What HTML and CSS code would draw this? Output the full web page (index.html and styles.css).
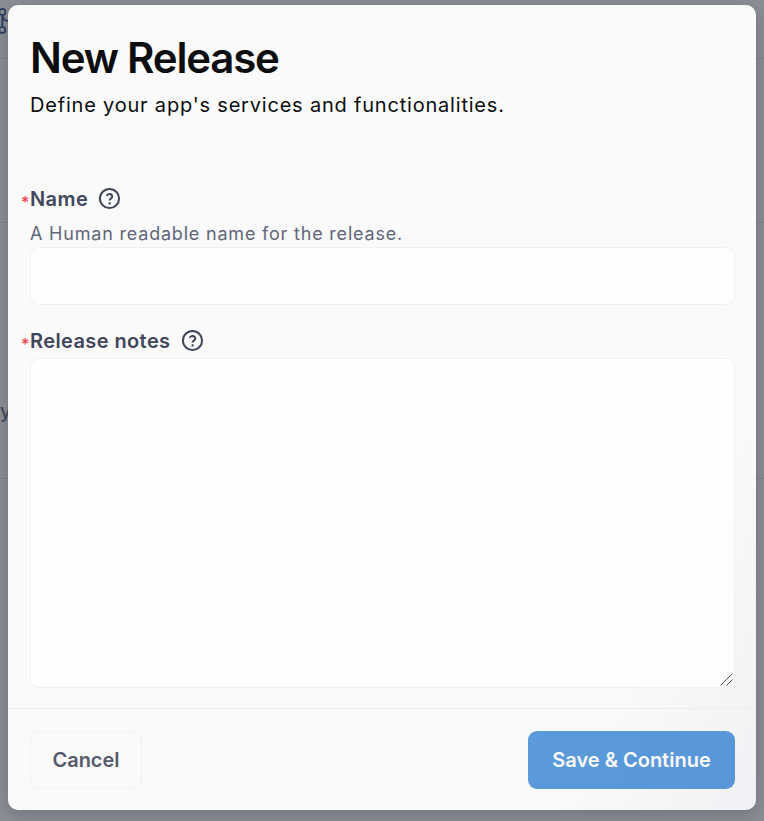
FILE: index.html
```html
<!DOCTYPE html>
<html lang="en">
<head>
<meta charset="utf-8">
<title>New Release</title>
<link rel="stylesheet" href="styles.css">
</head>
<body>
<div class="page" aria-hidden="true">
  <div class="page-row page-header">
    <svg class="branch" width="14" height="28" viewBox="0 0 14 28" fill="none" stroke="#2b3f5e" stroke-width="1.9">
      <circle cx="3.3" cy="5" r="3.1"/><circle cx="3.3" cy="23" r="3.1"/>
      <path d="M3.3 8v12M4 9c0 3.5 2 5 6 5"/>
    </svg>
  </div>
  <div class="page-row page-summary"></div>
  <div class="page-row page-content">y</div>
</div>
<form class="dialog">
  <header class="dialog-header">
    <h1>New Release</h1>
    <p>Define your app's services and functionalities.</p>
  </header>
  <div class="field">
    <label class="label" for="name"><span class="required">*</span>Name
      <svg class="help" viewBox="0 0 24 24"><circle cx="12" cy="12" r="10"/><path d="M9.1 9.3a3 3 0 0 1 5.8.7c0 2-2.8 2.3-2.8 4.1M12.1 16v2.3"/></svg>
    </label>
    <p class="hint">A Human readable name for the release.</p>
    <input id="name" class="control" type="text">
  </div>
  <div class="field notes">
    <label class="label" for="notes"><span class="required">*</span>Release notes
      <svg class="help" viewBox="0 0 24 24"><circle cx="12" cy="12" r="10"/><path d="M9.1 9.3a3 3 0 0 1 5.8.7c0 2-2.8 2.3-2.8 4.1M12.1 16v2.3"/></svg>
    </label>
    <div class="area">
      <textarea id="notes" class="control"></textarea>
      <svg class="grip" width="13" height="13" viewBox="0 0 13 13"><path d="M.5 12.5l12-12M6.5 12.5l6-6"/></svg>
    </div>
  </div>
  <footer class="dialog-footer">
    <button class="button cancel" type="button">Cancel</button>
    <button class="button save" type="button">Save &amp; Continue</button>
  </footer>
</form>
</body>
</html>
```
FILE: styles.css
```css
* { box-sizing: border-box; }
body {
  margin: 0;
  height: 821px;
  padding: 5px 8px 11px;
  overflow: hidden;
  background: #8c8e95;
  font-family: Inter, "Liberation Sans", sans-serif;
}
h1, p { margin: 0; }
.page { position: absolute; inset: 0; overflow: hidden; }
.page-row { border-bottom: 1px solid #7f8189; }
.page-header { height: 59px; padding-top: 7px; }
.branch { display: block; margin-left: -1px; }
.page-summary { height: 164px; }
.page-content { height: 256px; padding-top: 176px; font-size: 20px; line-height: 24px; color: #383c4b; }
.dialog {
  position: relative;
  display: flex;
  flex-direction: column;
  height: 805px;
  border-radius: 10px;
  background: linear-gradient(115deg, #fafafa 82%, #f1f1f5 100%);
  box-shadow: 0 4px 16px rgba(65, 69, 86, .38);
}
.dialog-header { height: 176px; padding: 27px 22px 0; color: #0b0d0e; }
h1 { font-size: 42px; line-height: 52px; font-weight: 600; letter-spacing: -1.2px; }
.dialog-header p { margin-top: 8px; font-size: 20px; line-height: 26px; letter-spacing: .8px; font-weight: 400; }
.field { display: flex; flex-direction: column; padding: 0 21px 0 22px; }
.label {
  position: relative;
  display: flex;
  align-items: center;
  gap: 10px;
  height: 35px;
  color: #41465a;
  font-size: 20px;
  font-weight: 600;
  letter-spacing: .4px;
}
.required { position: absolute; left: -9px; top: 11px; color: #ff3b50; font-size: 16px; line-height: 20px; font-weight: 500; letter-spacing: 0; }
.help { width: 23px; height: 23px; fill: none; stroke: #41465a; stroke-width: 2.1; }
.hint { height: 31px; line-height: 35px; font-size: 18px; letter-spacing: .8px; color: #626679; }
.control {
  display: block;
  width: 100%;
  height: 58px;
  padding: 16px 20px;
  border: 1px solid #f1f1f2;
  border-radius: 9px;
  outline: 0;
  background: rgba(255, 255, 255, .75);
  font: 20px Inter, sans-serif;
}
.notes { margin-top: 18px; }
.area { position: relative; }
textarea.control { height: 330px; resize: none; }
.grip { position: absolute; right: 2px; bottom: 2px; fill: none; stroke: #4c4c4c; stroke-width: 1; }
.dialog-footer {
  display: flex;
  justify-content: space-between;
  align-items: center;
  margin-top: auto;
  height: 102px;
  padding: 0 21px 0 22px;
  border-top: 1px solid #ededef;
}
.button { height: 58px; border-radius: 9px; padding: 0; font: 600 20px/56px Inter, sans-serif; }
.cancel { width: 112px; border: 1px solid #f2f2f3; background: transparent; color: #555a6c; }
.save { width: 207px; border: 0; background: linear-gradient(115deg, #5b9bdb, #5896d7); color: #fafafa; }
```
